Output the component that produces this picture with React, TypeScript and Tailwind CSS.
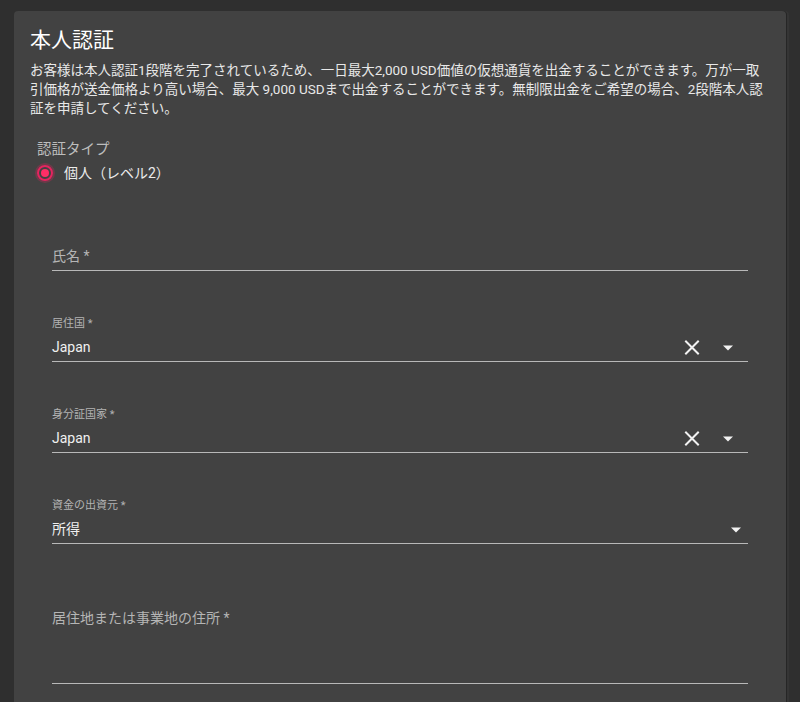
import React from "react";

const FONT = "Roboto, 'Noto Sans CJK JP', 'Noto Sans', sans-serif";

function XIcon() {
  return (
    <svg width="24" height="24" viewBox="0 0 24 24">
      <path d="M6 3.5 L18 15.5 M18 3.5 L6 15.5" stroke="#f2f2f2" strokeWidth="2" strokeLinecap="square" />
    </svg>
  );
}

function Caret() {
  return (
    <svg width="24" height="24" viewBox="0 0 24 24">
      <path d="M7 7.5 L17 7.5 L12 12.5 Z" fill="#f2f2f2" />
    </svg>
  );
}

function Field({
  label,
  value,
  clearable,
  select,
  caretTight,
}: {
  label: string;
  value: string;
  clearable?: boolean;
  select?: boolean;
  caretTight?: boolean;
}) {
  return (
    <div className="mx-[22px]">
      <div className="h-[16px] text-[11px] leading-[12px] text-[#b3b3b3]">{label}</div>
      <div className="mt-[4px] flex h-[24px] items-start border-b border-[#b8b8b8]">
        <span className="flex-1 text-[14px] leading-[18px] text-[#f0f0f0]">{value}</span>
        {clearable && <XIcon />}
        {select && (
          <span className={caretTight ? "ml-[12px] mr-0" : "ml-[12px] mr-[8px]"}>
            <Caret />
          </span>
        )}
      </div>
    </div>
  );
}

export default function App() {
  return (
    <div
      className="min-h-[702px] w-full bg-[#2f2f2f] pl-[14px] pr-[14px] pt-[11px]"
      style={{ fontFamily: FONT }}
    >
      <div className="min-h-[700px] rounded-[4px] bg-[#424242] px-4 pt-[13px] shadow-[1px_0_0_#262626,3px_0_0_#353535]">
        <h1 className="text-[21px] leading-[32px] text-white">本人認証</h1>
        <div className="mt-[5px] text-[13.5px] leading-[19px] text-[#e8e8e8]">
          <div className="whitespace-nowrap">
            お客様は本人認証1段階を完了されているため、一日最大2,000 USD価値の仮想通貨を出金することができます。万が一取
          </div>
          <div className="whitespace-nowrap">
            引価格が送金価格より高い場合、最大 9,000 USDまで出金することができます。無制限出金をご希望の場合、2段階本人認
          </div>
          <div className="whitespace-nowrap">証を申請してください。</div>
        </div>

        <div className="mt-[22px] pl-[7px]">
          <div className="text-[14.5px] leading-[20px] text-[#bdbdbd]">認証タイプ</div>
          <div className="flex h-[26px] items-center">
            <span className="flex h-[16px] w-[16px] items-center justify-center rounded-full border-2 border-[#e5245f] shadow-[0_0_0_2px_rgba(229,36,95,0.28)]">
              <span className="h-[8px] w-[8px] rounded-full bg-[#ff2e66]" />
            </span>
            <span className="ml-[11px] text-[14px] leading-[20px] text-[#ececec]">個人（レベル2）</span>
          </div>
        </div>

        <div className="mt-[41px]">
          <div className="mx-[22px]">
            <div className="h-[16px]" />
            <div className="mt-[4px] flex h-[24px] items-start border-b border-[#b8b8b8]">
              <span className="text-[14px] leading-[18px] text-[#b5b5b5]">氏名 *</span>
            </div>
          </div>
        </div>

        <div className="mt-[47px]">
          <Field label="居住国 *" value="Japan" clearable select />
        </div>
        <div className="mt-[47px]">
          <Field label="身分証国家 *" value="Japan" clearable select />
        </div>
        <div className="mt-[47px]">
          <Field label="資金の出資元 *" value="所得" select caretTight />
        </div>

        <div className="mt-[47px] mx-[22px]">
          <div className="h-[16px]" />
          <div className="mt-[4px] h-[73px] border-b border-[#b8b8b8]">
            <span className="block text-[14px] leading-[14px] text-[#b5b5b5]">居住地または事業地の住所 *</span>
          </div>
        </div>
      </div>
    </div>
  );
}
